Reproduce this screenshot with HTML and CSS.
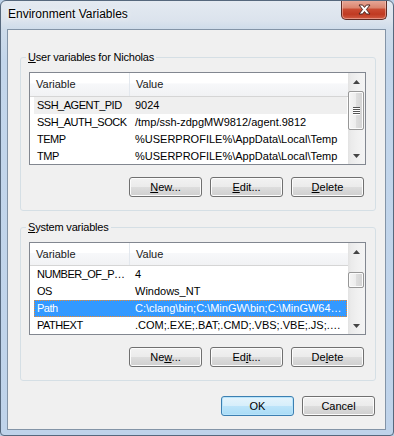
FILE: index.html
```html
<!DOCTYPE html>
<html>
<head>
<meta charset="utf-8">
<link rel="stylesheet" href="styles.css">
</head>
<body>
<div class="window">
  <div class="titlebar">
    <span class="title">Environment Variables</span>
    <div class="close">
      <svg width="13" height="11" viewBox="0 0 13 11"><path d="M1 1 H4.6 L6.5 3.4 L8.4 1 H12 L8.4 5.5 L12 10 H8.4 L6.5 7.6 L4.6 10 H1 L4.6 5.5 Z" fill="#fff" stroke="#4b2520" stroke-width="1" stroke-linejoin="round"/></svg>
    </div>
  </div>
  <div class="client">
    <fieldset class="group">
      <legend><u>U</u>ser variables for Nicholas</legend>
      <div class="list list-user">
        <div class="list-main">
          <div class="list-head"><span class="c1">Variable</span><span class="c2">Value</span></div>
          <div class="row hot"><span class="c1">SSH_AGENT_PID</span><span class="c2">9024</span></div>
          <div class="row"><span class="c1">SSH_AUTH_SOCK</span><span class="c2">/tmp/ssh-zdpgMW9812/agent.9812</span></div>
          <div class="row"><span class="c1">TEMP</span><span class="c2">%USERPROFILE%\AppData\Local\Temp</span></div>
          <div class="row"><span class="c1">TMP</span><span class="c2">%USERPROFILE%\AppData\Local\Temp</span></div>
        </div>
        <div class="vscroll">
          <div class="arrow"><svg width="7" height="4" viewBox="0 0 7 4"><path d="M0 4 L3.5 0 L7 4 Z" fill="#444"/></svg></div>
          <div class="track"><div class="thumb thumb-user">
            <svg width="7" height="8" viewBox="0 0 7 8"><path d="M0 0.5H7M0 2.5H7M0 4.5H7M0 6.5H7" stroke="#555" stroke-width="1"/><path d="M0 1.5H7M0 3.5H7M0 5.5H7M0 7.5H7" stroke="#fff" stroke-width="1"/></svg>
          </div></div>
          <div class="arrow"><svg width="7" height="4" viewBox="0 0 7 4"><path d="M0 0 L7 0 L3.5 4 Z" fill="#444"/></svg></div>
        </div>
      </div>
      <div class="buttons">
        <button class="btn"><u>N</u>ew...</button>
        <button class="btn"><u>E</u>dit...</button>
        <button class="btn"><u>D</u>elete</button>
      </div>
    </fieldset>
    <fieldset class="group group-2">
      <legend><u>S</u>ystem variables</legend>
      <div class="list">
        <div class="list-main">
          <div class="list-head"><span class="c1">Variable</span><span class="c2">Value</span></div>
          <div class="row"><span class="c1">NUMBER_OF_P…</span><span class="c2">4</span></div>
          <div class="row"><span class="c1">OS</span><span class="c2">Windows_NT</span></div>
          <div class="row selected"><span class="c1">Path</span><span class="c2">C:\clang\bin;C:\MinGW\bin;C:\MinGW64…</span></div>
          <div class="row"><span class="c1">PATHEXT</span><span class="c2">.COM;.EXE;.BAT;.CMD;.VBS;.VBE;.JS;.…</span></div>
        </div>
        <div class="vscroll">
          <div class="arrow"><svg width="7" height="4" viewBox="0 0 7 4"><path d="M0 4 L3.5 0 L7 4 Z" fill="#444"/></svg></div>
          <div class="track"><div class="thumb thumb-sys"></div></div>
          <div class="arrow"><svg width="7" height="4" viewBox="0 0 7 4"><path d="M0 0 L7 0 L3.5 4 Z" fill="#444"/></svg></div>
        </div>
      </div>
      <div class="buttons">
        <button class="btn">Ne<u>w</u>...</button>
        <button class="btn">Ed<u>i</u>t...</button>
        <button class="btn">De<u>l</u>ete</button>
      </div>
    </fieldset>
    <div class="dialog-buttons">
      <button class="btn default">OK</button>
      <button class="btn">Cancel</button>
    </div>
  </div>
</div>
</body>
</html>
```
FILE: styles.css
```css
html, body {
  margin: 0;
  padding: 0;
  background: #bcd1e8;
}
body {
  font-family: "Liberation Sans", Arial, sans-serif;
  font-size: 11px;
  color: #000;
}
.window {
  box-sizing: border-box;
  width: 394px;
  height: 436px;
  border: 1px solid #56687d;
  border-radius: 6px 6px 4px 4px;
  padding: 0 7px 5px 6px;
  background: linear-gradient(to bottom, #e4eaf1 0, #dbe3ed 20px, #cfdcea 28px, #c3d6eb 60px, #bfd3ea 100%);
  display: flex;
  flex-direction: column;
  overflow: hidden;
}
.titlebar {
  height: 28px;
  flex: none;
  display: flex;
  justify-content: space-between;
  align-items: flex-start;
}
.title {
  padding-left: 1px;
  font-size: 12px;
  line-height: 26px;
  text-shadow: 0 0 6px rgba(255, 255, 255, 0.95), 0 0 3px rgba(255, 255, 255, 0.9);
}
.close {
  box-sizing: border-box;
  width: 46px;
  height: 20px;
  margin: -1px -1px 0 0;
  border: 1px solid #5d2b25;
  border-top: none;
  border-radius: 0 0 5px 5px;
  background: linear-gradient(to bottom, #e8ab9c 0%, #db8670 40%, #c94a31 50%, #c03a22 75%, #d05b43 100%);
  box-shadow: inset 0 0 0 1px rgba(255, 220, 210, 0.45);
  display: flex;
  align-items: center;
  justify-content: center;
}
.client {
  flex: 1;
  border: 1px solid #8394a7;
  background: #f0f0f0;
  display: flex;
  flex-direction: column;
}
.group {
  margin: 20px 9px 0 12px;
  padding: 8px 9px 13px 8px;
  border: 1px solid #d5dfe5;
  border-radius: 3px;
  min-width: 0;
}
.group-2 {
  margin-top: 9px;
}
.group legend {
  padding: 0 2px;
  margin-left: -3px;
  line-height: 14px;
  letter-spacing: -0.2px;
  background: #f0f0f0;
}
.list {
  box-sizing: border-box;
  height: 93px;
  border: 1px solid #828790;
  background: #fff;
  display: flex;
  overflow: hidden;
}
.list-main {
  flex: 1;
  min-width: 0;
  overflow: hidden;
}
.list-head {
  display: flex;
  height: 22px;
  line-height: 22px;
  border-bottom: 1px solid #d5d5d5;
  background: linear-gradient(to bottom, #ffffff 0%, #ffffff 45%, #f7f8fa 46%, #f1f2f4 100%);
  color: #1a1a1a;
}
.list-user .list-head {
  height: 23px;
  line-height: 23px;
}
.list-head .c1 {
  box-sizing: border-box;
  width: 100px;
  flex: none;
  padding-left: 6px;
  border-right: 1px solid #e3e8ee;
}
.list-head .c2 {
  padding-left: 6px;
}
.row {
  display: flex;
  height: 17px;
  line-height: 17px;
  margin: 0 1px 0 4px;
  white-space: nowrap;
}
.row .c1 {
  box-sizing: border-box;
  width: 96px;
  flex: none;
  padding-left: 3px;
  letter-spacing: -0.5px;
  overflow: hidden;
}
.row .c2 {
  flex: 1;
  padding-left: 5px;
  overflow: hidden;
}
.row.hot {
  background: #efefef;
}
.row.selected {
  background: #3399ff;
  color: #fff;
  outline: 1px dotted #f08a2c;
  outline-offset: -1px;
}
.vscroll {
  width: 17px;
  flex: none;
  display: flex;
  flex-direction: column;
  background: linear-gradient(to right, #e2e2e2 0, #ebebeb 3px, #f1f1f1 60%, #f4f4f4 100%);
}
.arrow {
  height: 17px;
  flex: none;
  display: flex;
  align-items: center;
  justify-content: center;
}
.track {
  flex: 1;
  padding: 0 1px 0 0;
}
.thumb {
  box-sizing: border-box;
  border: 1px solid #979797;
  border-radius: 2px;
  background: linear-gradient(to right, #f5f5f5 0%, #ececec 50%, #dedede 51%, #d2d2d2 100%);
  box-shadow: inset 0 0 0 1px #fbfbfb;
  display: flex;
  align-items: center;
  justify-content: center;
}
.thumb-user {
  margin-top: 1px;
  height: 39px;
}
.thumb-sys {
  margin-top: 12px;
  height: 16px;
}
.buttons {
  display: flex;
  justify-content: flex-end;
  gap: 8px;
  margin-top: 12px;
  padding-right: 2px;
}
.btn {
  box-sizing: border-box;
  width: 73px;
  height: 20px;
  padding: 0;
  border: 1px solid #707070;
  border-radius: 3px;
  background: linear-gradient(to bottom, #f2f2f2 0%, #ebebeb 50%, #dddddd 51%, #cfcfcf 100%);
  box-shadow: inset 0 0 0 1px #fcfcfc;
  font-family: "Liberation Sans", Arial, sans-serif;
  font-size: 11px;
  color: #000;
  line-height: 16px;
}
.btn.default {
  border-color: #3c7fb1;
  background: linear-gradient(to bottom, #e5f4fc 0%, #d6eefb 50%, #bce4fa 51%, #a9dcf6 100%);
  box-shadow: inset 0 0 0 1px #b8e4fb;
}
.dialog-buttons {
  display: flex;
  justify-content: flex-end;
  gap: 8px;
  margin: 15px 10px 0 0;
}
```
